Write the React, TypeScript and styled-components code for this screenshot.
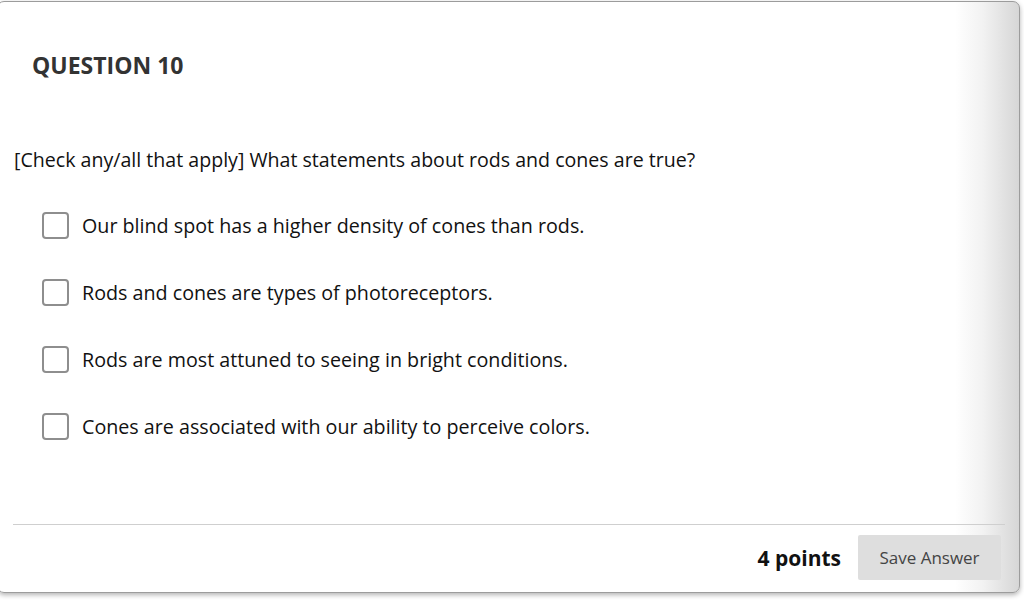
import React from "react";
import styled, { createGlobalStyle } from "styled-components";

const options = [
  "Our blind spot has a higher density of cones than rods.",
  "Rods and cones are types of photoreceptors.",
  "Rods are most attuned to seeing in bright conditions.",
  "Cones are associated with our ability to perceive colors.",
];

const GlobalStyle = createGlobalStyle`
  html, body {
    margin: 0;
    padding: 0;
    background: #ffffff;
    overflow: hidden;
  }
  body {
    font-family: "Open Sans", "Noto Sans", sans-serif;
  }
`;

const App = () => {
  return (
    <>
      <GlobalStyle />
      <Page>
        <Card>
          <Heading>QUESTION 10</Heading>
          <Prompt>
            [Check any/all that apply] What statements about rods and cones are
            true?
          </Prompt>
          <OptionList>
            {options.map((text) => (
              <Option key={text}>
                <Box type="checkbox" />
                <OptionText>{text}</OptionText>
              </Option>
            ))}
          </OptionList>
          <Divider />
          <Footer>
            <Points>4 points</Points>
            <SaveButton>Save Answer</SaveButton>
          </Footer>
        </Card>
      </Page>
    </>
  );
};

const Page = styled.div`
  width: 1024px;
  height: 607px;
  padding-top: 1px;
  box-sizing: border-box;
`;

const Card = styled.div`
  margin-left: -3px;
  width: 1023px;
  height: 592px;
  box-sizing: border-box;
  border: 1px solid #9c9c9c;
  border-radius: 7px;
  background: linear-gradient(
    to right,
    #ffffff calc(100% - 64px),
    #f2f2f2 calc(100% - 36px),
    #d6d6d6
  );
  box-shadow: 0 2px 5px rgba(0, 0, 0, 0.3);
  display: flex;
  flex-direction: column;
  padding: 0 14px 0 16px;
`;

const Heading = styled.h2`
  margin: 47px 0 0 18px;
  font-size: 23px;
  line-height: 32px;
  font-weight: 700;
  color: #333333;
`;

const Prompt = styled.p`
  margin: 66px 0 0 0;
  font-size: 19.6px;
  line-height: 26px;
  color: #111111;
`;

const OptionList = styled.div`
  margin: 37px 0 0 28px;
  display: flex;
  flex-direction: column;
  gap: 37px;
`;

const Option = styled.label`
  display: flex;
  align-items: center;
  gap: 13px;
  height: 30px;
`;

const Box = styled.input`
  appearance: none;
  margin: 0;
  width: 27px;
  height: 27px;
  box-sizing: border-box;
  border: 2px solid #8e8e8e;
  border-radius: 4px;
  background: #ffffff;
`;

const OptionText = styled.span`
  font-size: 19.7px;
  color: #111111;
`;

const Divider = styled.hr`
  margin: auto 0 0 -1px;
  border: none;
  border-top: 1px solid #cfcfcf;
  height: 0;
`;

const Footer = styled.div`
  display: flex;
  justify-content: flex-end;
  align-items: center;
  gap: 17px;
  margin: 10px 4px 12px 0;
`;

const Points = styled.span`
  font-size: 21px;
  font-weight: 700;
  color: #111111;
`;

const SaveButton = styled.button`
  width: 143px;
  height: 45px;
  border: none;
  border-radius: 2px;
  background: #dedede;
  color: #444444;
  font-family: "Open Sans", "Noto Sans", sans-serif;
  font-size: 17px;
`;

export default App;
